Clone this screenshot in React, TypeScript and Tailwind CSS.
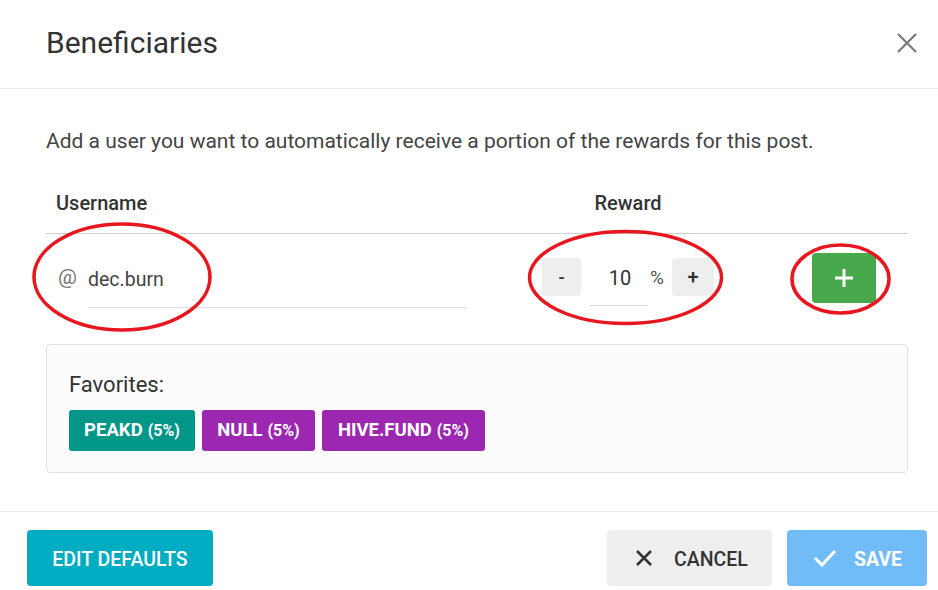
import React from 'react';

const favorites = [
  { name: 'PEAKD', pct: '(5%)', color: 'bg-[#009688]', width: 'w-[126px]' },
  { name: 'NULL', pct: '(5%)', color: 'bg-[#9c27b0]', width: 'w-[113px]' },
  { name: 'HIVE.FUND', pct: '(5%)', color: 'bg-[#9c27b0]', width: 'w-[163px]' },
];

const BeneficiariesDialog = () => {
  return (
    <div className="relative w-[938px] h-[590px] bg-white overflow-hidden text-[#333] font-['Roboto',sans-serif]">
      {/* header */}
      <div className="h-[89px] flex items-center justify-between pl-[46px] pr-[20px] border-b border-[#eeeeee]">
        <h1 className="text-[30px] text-[#333] pb-[3px]">Beneficiaries</h1>
        <button className="w-[22px] h-[22px] flex items-center justify-center mb-[2px]">
          <svg width="22" height="22" viewBox="0 0 22 22">
            <path d="M2 2 L20 20 M20 2 L2 20" stroke="#7a7a7a" strokeWidth="2.2" />
          </svg>
        </button>
      </div>

      {/* body */}
      <div className="px-[30px] pt-[38px]">
        <p className="pl-[16px] text-[21px] leading-[28px] text-[#444]">
          Add a user you want to automatically receive a portion of the rewards for this post.
        </p>

        <div className="ml-[16px] mt-[30px] w-[862px]">
          <div className="flex h-[49px] items-center border-b border-[#cfcfcf] text-[20px] font-medium text-[#333]">
            <div className="w-[484px] pl-[10px] pb-[12px]">Username</div>
            <div className="w-[198px] text-center pb-[12px] pr-[2px]">Reward</div>
            <div className="flex-1" />
          </div>

          <div className="flex h-[86px] items-center">
            <div className="w-[484px] flex items-center pl-[12px]">
              <span className="text-[21px] text-[#757575] w-[30px] mt-[1px]">@</span>
              <div className="w-[379px] h-[44px] mt-[18px] flex items-center border-b border-[#dddddd] pb-[12px]">
                <span className="text-[19.5px] text-[#444]">dec.burn</span>
              </div>
            </div>
            <div className="w-[198px] flex items-center pl-[12px]">
              <button className="w-[39px] h-[38px] rounded-[4px] bg-[#eeeeee] text-[18px] font-medium text-[#333] flex items-center justify-center">-</button>
              <div className="ml-[9px] w-[58px] h-[44px] mt-[14px] border-b border-[#dddddd] flex items-center justify-center pb-[12px] pl-[2px]">
                <span className="text-[20px] text-[#333]">10</span>
              </div>
              <span className="ml-[2px] text-[19px] text-[#555] w-[22px] mt-[2px]">%</span>
              <button className="w-[42px] h-[38px] rounded-[4px] bg-[#eeeeee] text-[20px] font-medium text-[#333] flex items-center justify-center">+</button>
            </div>
            <div className="flex-1 flex justify-end pr-[32px]">
              <button className="w-[64px] h-[50px] mt-[2px] rounded-[4px] bg-[#47a94c] flex items-center justify-center">
                <svg width="20" height="20" viewBox="0 0 20 20">
                  <path d="M10 1 V19 M1 10 H19" stroke="#fff" strokeWidth="3" />
                </svg>
              </button>
            </div>
          </div>

          <div className="mt-[24px] h-[129px] rounded-[4px] border border-[#e2e2e2] bg-[#fcfcfc] px-[22px] pt-[25px]">
            <div className="text-[22px] text-[#333] leading-[30px]">Favorites:</div>
            <div className="mt-[10px] flex gap-[7px]">
              {favorites.map(f => (
                <div
                  key={f.name}
                  className={`${f.color} ${f.width} h-[41px] rounded-[3px] flex items-center justify-center text-white font-bold`}
                >
                  <span className="text-[18.5px]">{f.name}</span>
                  <span className="text-[16px] ml-[5px]">{f.pct}</span>
                </div>
              ))}
            </div>
          </div>
        </div>
      </div>

      {/* footer */}
      <div className="absolute left-0 right-0 top-[511px] border-t border-[#eeeeee] flex items-center justify-between pl-[27px] pr-[11px] pt-[18px]">
        <button className="w-[186px] h-[56px] rounded-[4px] bg-[#00acc1] text-white text-[19.5px] font-medium pt-[4px]">
          EDIT DEFAULTS
        </button>
        <div className="flex gap-[15px]">
          <button className="w-[165px] h-[56px] rounded-[4px] bg-[#eeeeee] flex items-center pl-[27px] pt-[4px] text-[19.5px] font-medium text-[#333]">
            <svg width="20" height="20" viewBox="0 0 20 20" className="mr-[20px] -mt-[4px]">
              <path d="M3 3 L17 17 M17 3 L3 17" stroke="#333" strokeWidth="2.6" />
            </svg>
            CANCEL
          </button>
          <button className="w-[140px] h-[56px] rounded-[4px] bg-[#71bbf6] flex items-center pl-[26px] pt-[4px] text-[19.5px] font-bold text-white">
            <svg width="24" height="20" viewBox="0 0 24 20" className="mr-[17px] -mt-[4px]">
              <path d="M2 10 L9 17 L22 3" stroke="#fff" strokeWidth="3" fill="none" />
            </svg>
            SAVE
          </button>
        </div>
      </div>

      {/* red annotation ellipses */}
      <svg className="absolute left-0 top-0 pointer-events-none" width="938" height="590">
        <ellipse cx="122" cy="277" rx="88" ry="53" fill="none" stroke="#e8161e" strokeWidth="3.5" />
        <ellipse cx="625.5" cy="277.5" rx="96" ry="46" fill="none" stroke="#e8161e" strokeWidth="3.5" />
        <ellipse cx="840.5" cy="279" rx="48.5" ry="34" fill="none" stroke="#e8161e" strokeWidth="3.5" />
      </svg>
    </div>
  );
};

export default BeneficiariesDialog;
